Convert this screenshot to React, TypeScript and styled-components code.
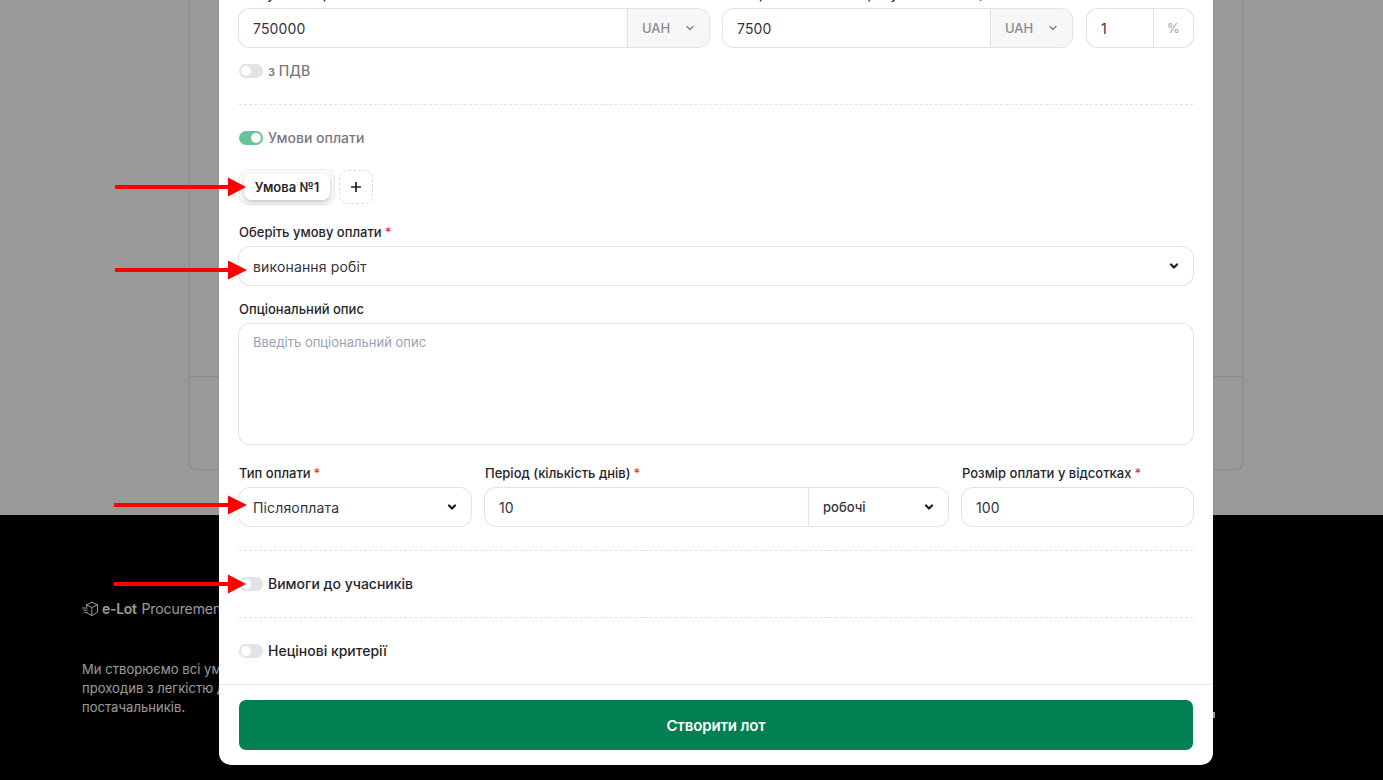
import React from "react";
import styled, { createGlobalStyle } from "styled-components";

const Global = createGlobalStyle`
  html, body { margin: 0; padding: 0; height: 100%; overflow: hidden; background: #000; }
  * { box-sizing: border-box; }
  body { font-family: "Inter", "Noto Sans", sans-serif; color: #26262b; }
`;

const Page = styled.div`
  position: relative;
  width: 1383px;
  height: 780px;
  overflow: hidden;
  display: flex;
  flex-direction: column;
`;
const Main = styled.main`
  height: 515px;
  background: #fff;
  padding: 0 140px 45px 189px;
  display: flex;
`;
const BackCard = styled.section`
  flex: 1;
  border: 1px solid #e4e4e7;
  border-top: 0;
  border-radius: 0 0 6px 6px;
  display: flex;
  flex-direction: column;
`;
const BackCardTop = styled.div`
  height: 377px;
  border-bottom: 1px solid #e4e4e7;
`;
const SiteFooter = styled.footer`
  flex: 1;
  position: relative;
  background: #000;
  color: #fff;
  padding: 84px 0 0 82px;
`;
const Brand = styled.div`
  display: flex;
  align-items: center;
  gap: 4px;
  font-size: 14px;
  line-height: 20px;
  white-space: nowrap;
  b { font-weight: 600; letter-spacing: -0.3px; margin-right: 1px; }
  span { letter-spacing: -0.1px; }
`;
const Blurb = styled.p`
  margin: 41px 0 0;
  font-size: 13px;
  line-height: 19px;
  font-weight: 400;
  letter-spacing: 0.05px;
  span { display: block; white-space: nowrap; }
`;
const FooterMark = styled.span`
  position: absolute;
  left: 1213px;
  top: 197px;
  width: 2px;
  height: 6px;
  background: #fff;
`;
const Overlay = styled.div`
  position: absolute;
  inset: 0;
  background: rgba(0, 0, 0, 0.4);
`;
const Modal = styled.div`
  position: absolute;
  left: 219px;
  top: -35px;
  width: 994px;
  height: 800px;
  background: #fff;
  border-radius: 12px;
  display: flex;
  flex-direction: column;
  overflow: hidden;
`;
const Body = styled.div`
  flex: 1;
  padding: 20px 20px 0;
  display: flex;
  flex-direction: column;
`;
const Grid = styled.div<{ $cols: string; $top?: number }>`
  display: grid;
  grid-template-columns: ${(p) => p.$cols};
  gap: 14px;
  margin-top: ${(p) => p.$top ?? 0}px;
`;
const Field = styled.div<{ $top?: number; $left?: number }>`
  display: flex;
  flex-direction: column;
  gap: 6px;
  min-width: 0;
  margin-top: ${(p) => p.$top ?? 0}px;
  margin-left: ${(p) => p.$left ?? 0}px;
`;
const Label = styled.label`
  font-size: 13px;
  line-height: 18px;
  font-weight: 500;
  color: #26262b;
  white-space: nowrap;
  i { font-style: normal; color: #f0303a; margin-left: 3px; }
`;
const Control = styled.div`
  height: 38px;
  border-radius: 11px;
  box-shadow: 0 0 0 1px #e3e3e6;
  background: #fff;
  display: flex;
  align-items: center;
  overflow: hidden;
  font-size: 14px;
  color: #33333a;
`;
const Value = styled.span`
  flex: 1;
  padding: 0 14px;
  white-space: nowrap;
  letter-spacing: 0.15px;
`;
const Suffix = styled.div<{ $w: number; $shade?: boolean }>`
  width: ${(p) => p.$w}px;
  height: 100%;
  flex: none;
  display: flex;
  align-items: center;
  justify-content: space-between;
  padding: 0 13px 0 14px;
  border-left: 1px solid #e0e2e8;
  background: ${(p) => (p.$shade ? "#f7f7f7" : "#fff")};
  color: #8b8b8f;
  font-size: 13px;
  font-weight: 500;
`;
const PercentSuffix = styled.div`
  width: 40px;
  height: 100%;
  flex: none;
  display: flex;
  align-items: center;
  justify-content: center;
  border-left: 1px solid #e0e2e8;
  color: #a3a3a7;
  font-size: 13px;
  font-weight: 400;
`;
const UnitSelect = styled(Suffix)`
  color: #33333a;
  background: #fff;
`;
const Chevron = styled.svg<{ $muted?: boolean }>`
  width: 12px;
  height: 12px;
  flex: none;
  fill: none;
  stroke: ${(p) => (p.$muted ? "#8b8b8f" : "#1c1c20")};
  stroke-width: ${(p) => (p.$muted ? 1.6 : 2.2)};
  stroke-linecap: round;
  stroke-linejoin: round;
`;
const SelectPad = styled.span`
  padding-right: 13px;
  display: flex;
`;
const ToggleRow = styled.div<{ $top: number }>`
  height: 20px;
  margin-top: ${(p) => p.$top}px;
  display: flex;
  align-items: center;
  gap: 5px;
`;
const ToggleTrack = styled.span<{ $on?: boolean }>`
  width: 24px;
  height: 14px;
  flex: none;
  border-radius: 7px;
  padding: 2px;
  background: ${(p) => (p.$on ? "#66c598" : "#e2e3e6")};
  display: flex;
  justify-content: ${(p) => (p.$on ? "flex-end" : "flex-start")};
  &::after {
    content: "";
    width: 10px;
    height: 10px;
    border-radius: 50%;
    background: #fff;
  }
`;
const ToggleText = styled.span<{ $strong?: boolean }>`
  font-size: 14px;
  line-height: 18px;
  padding-bottom: 1px;
  font-weight: 500;
  color: ${(p) => (p.$strong ? "#26262b" : "#78787c")};
`;
const Dash = styled.hr<{ $top: number }>`
  margin: ${(p) => p.$top}px 0 0;
  border: 0;
  border-top: 1px dashed #e2e3e8;
  height: 1px;
`;
const TabRow = styled.div`
  margin-top: 21px;
  display: flex;
  align-items: center;
  gap: 4px;
`;
const TabList = styled.div`
  width: 96px;
  height: 36px;
  border: 1px solid #e8e8ea;
  border-radius: 9px;
  background: #fafafa;
  padding: 4px;
  display: flex;
`;
const Tab = styled.button`
  flex: 1;
  border: 0;
  padding: 0;
  border-radius: 7px;
  background: #fff;
  box-shadow: 0 2px 4px rgba(0, 0, 0, 0.22);
  font: 600 13px "Inter", sans-serif;
  color: #26262b;
  white-space: nowrap;
`;
const AddTab = styled.button`
  width: 34px;
  height: 34px;
  padding: 0;
  border: 1px dashed #dcdcdf;
  border-radius: 9px;
  background: #fff;
  display: flex;
  align-items: center;
  justify-content: center;
  svg { width: 12px; height: 12px; stroke: #222; stroke-width: 1.7; fill: none; }
`;
const TextArea = styled.div`
  height: 120px;
  border-radius: 11px;
  box-shadow: 0 0 0 1px #e3e3e6;
  padding: 10px 14px;
  font-size: 13px;
  line-height: 16px;
  color: #98a2b3;
`;
const ModalFoot = styled.div`
  border-top: 1px solid #e7e7ec;
  padding: 15px 20px;
`;
const Submit = styled.button`
  width: 100%;
  height: 50px;
  border: 0;
  border-radius: 7px;
  background: #028051;
  color: #fff;
  font: 600 15px "Inter", sans-serif;
  letter-spacing: -0.15px;
`;
const Arrows = styled.svg`
  position: absolute;
  left: 0;
  top: 0;
  width: 1383px;
  height: 780px;
  pointer-events: none;
`;

const Down = ({ muted }: { muted?: boolean }) => (
  <Chevron $muted={muted} viewBox="0 0 12 12">
    <path d="M3 4.5 6 7.5 9 4.5" />
  </Chevron>
);

const Arrow = ({ y, x = 115, tip = 247 }: { y: number; x?: number; tip?: number }) => (
  <g fill="#ff0000">
    <rect x={x} y={y - 2} width={230 - x} height={4} />
    <polygon points={`228,${y - 9.5} ${tip},${y} 228,${y + 9.5}`} />
  </g>
);

export default function App() {
  return (
    <Page>
      <Global />
      <Main>
        <BackCard>
          <BackCardTop />
        </BackCard>
      </Main>
      <SiteFooter>
        <Brand>
          <svg width="16" height="16" viewBox="0 0 16 16" fill="none" stroke="#fff" strokeWidth="1" strokeLinejoin="round" strokeLinecap="round">
            <path d="M9.8 1.2 15.5 3.8v7.4l-5.7 3.4-4.8-2.6" />
            <path d="M4.6 3.9 9.8 1.2M4.6 3.9l5.2 2.6 5.7-2.7M9.8 6.5v8.1M4.6 3.9v2" />
            <path d="M0.5 7h4.7M1.5 9.2h3.7M2.5 11.4h2.7" />
          </svg>
          <span>
            <b>e-Lot</b> Procurement
          </span>
        </Brand>
        <Blurb>
          <span>Ми створюємо всі умови для</span>
          <span>проходив з легкістю для</span>
          <span>постачальників.</span>
        </Blurb>
        <FooterMark />
      </SiteFooter>
      <Overlay />
      <Modal>
        <Body>
          <Grid $cols="470px 349px 107px">
            <Field>
              <Label>Очікувана вартість</Label>
              <Control>
                <Value>750000</Value>
                <Suffix $w={82} $shade>
                  UAH <Down muted />
                </Suffix>
              </Control>
            </Field>
            <Field>
              <Label>Розмір мінімального кроку пониження (</Label>
              <Control>
                <Value>7500</Value>
                <Suffix $w={82} $shade>
                  UAH <Down muted />
                </Suffix>
              </Control>
            </Field>
            <Field $left={1}>
              <Label>&nbsp;</Label>
              <Control>
                <Value>1</Value>
                <PercentSuffix>%</PercentSuffix>
              </Control>
            </Field>
          </Grid>
          <ToggleRow $top={14}>
            <ToggleTrack />
            <ToggleText>з ПДВ</ToggleText>
          </ToggleRow>
          <Dash $top={23} />
          <ToggleRow $top={23}>
            <ToggleTrack $on />
            <ToggleText>Умови оплати</ToggleText>
          </ToggleRow>
          <TabRow>
            <TabList>
              <Tab>Умова №1</Tab>
            </TabList>
            <AddTab>
              <svg viewBox="0 0 12 12">
                <path d="M6 1v10M1 6h10" />
              </svg>
            </AddTab>
          </TabRow>
          <Field $top={18}>
            <Label>
              Оберіть умову оплати<i>*</i>
            </Label>
            <Control>
              <Value>виконання робіт</Value>
              <SelectPad>
                <Down />
              </SelectPad>
            </Control>
          </Field>
          <Field $top={15}>
            <Label>Опціональний опис</Label>
            <TextArea>Введіть опціональний опис</TextArea>
          </Field>
          <Grid $cols="232px 463px 231px" $top={20}>
            <Field>
              <Label>
                Тип оплати<i>*</i>
              </Label>
              <Control>
                <Value>Післяоплата</Value>
                <SelectPad>
                  <Down />
                </SelectPad>
              </Control>
            </Field>
            <Field>
              <Label>
                Період (кількість днів)<i>*</i>
              </Label>
              <Control>
                <Value>10</Value>
                <UnitSelect $w={140}>
                  робочі <Down />
                </UnitSelect>
              </Control>
            </Field>
            <Field>
              <Label>
                Розмір оплати у відсотках<i>*</i>
              </Label>
              <Control>
                <Value>100</Value>
              </Control>
            </Field>
          </Grid>
          <Dash $top={24} />
          <ToggleRow $top={23}>
            <ToggleTrack />
            <ToggleText $strong>Вимоги до учасників</ToggleText>
          </ToggleRow>
          <Dash $top={23} />
          <ToggleRow $top={23}>
            <ToggleTrack />
            <ToggleText $strong>Нецінові критерії</ToggleText>
          </ToggleRow>
        </Body>
        <ModalFoot>
          <Submit>Створити лот</Submit>
        </ModalFoot>
      </Modal>
      <Arrows viewBox="0 0 1383 780">
        <Arrow y={187} tip={246} />
        <Arrow y={270} />
        <Arrow y={505} x={114} />
        <Arrow y={584} x={114} tip={246} />
      </Arrows>
    </Page>
  );
}
